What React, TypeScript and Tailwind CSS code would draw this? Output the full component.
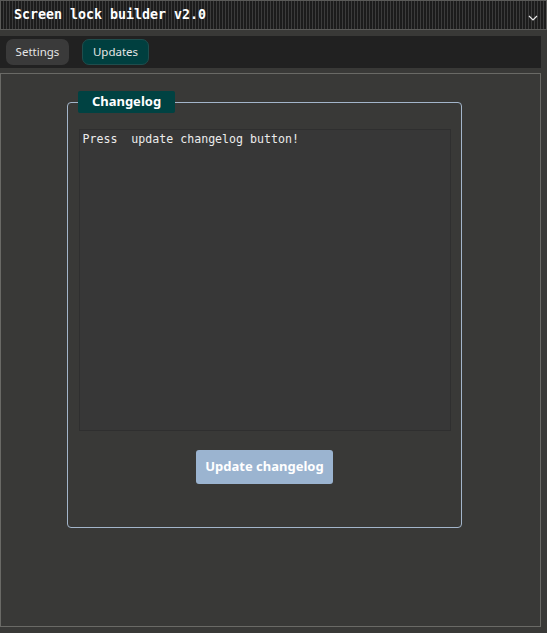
export default function App() {
  return (
    <div className="w-[547px] h-[633px] bg-[#393937] overflow-hidden font-['Noto_Sans',sans-serif] select-none">
      {/* Title bar */}
      <div className="h-[30px] border border-[#5a5a58] bg-[repeating-linear-gradient(90deg,#1c1c1c_0px,#1c1c1c_2px,#3c3c3c_2px,#3c3c3c_3px)] flex items-center justify-between pl-[13px] pr-[8px]">
        <span className="font-['DejaVu_Sans_Mono',monospace] font-bold text-[13.3px] text-white">Screen lock builder v2.0</span>
        <svg width="10" height="6" viewBox="0 0 10 6" className="mt-[5px]">
          <polyline points="1,1 5,5 9,1" fill="none" stroke="#e8e8e8" strokeWidth="1.2" />
        </svg>
      </div>

      {/* Tabs */}
      <div className="mt-[6px] mr-[6px] h-[32px] bg-[#212121] flex items-center gap-[13px] px-[6px]">
        <button className="h-[26px] w-[63px] rounded-[7px] bg-[#3a3a3a] text-[11.5px] text-[#e6e6e6]">Settings</button>
        <button className="h-[26px] w-[67px] rounded-[7px] bg-[#003f3f] border border-[#1f4d4d] text-[11.5px] text-[#e6e6e6]">Updates</button>
      </div>

      {/* Panel */}
      <div className="mt-[5px] mr-[6px] h-[554px] border border-[#6a6a66] pt-[28px] pl-[66px]">
        <div className="relative w-[395px] h-[426px] border border-[#a3b5ca] rounded-[4px] pt-[26px] px-[11px] flex flex-col items-center">
          <div className="absolute left-[10px] top-[-12px] h-[22px] w-[97px] bg-[#004242] rounded-[2px] flex items-center justify-center text-[13px] font-bold text-white">
            Changelog
          </div>
          <div className="w-[372px] h-[302px] bg-[#373737] border border-[#2f2f2f] px-[3px] pt-[1px] font-['DejaVu_Sans_Mono',monospace] text-[11.6px] text-[#ececec] whitespace-pre">
            Press  update changelog button!
          </div>
          <button className="mt-[19px] h-[34px] w-[137px] rounded-[3px] bg-[#9bb4d0] text-[13px] font-bold text-white">
            Update changelog
          </button>
        </div>
      </div>
    </div>
  );
}
